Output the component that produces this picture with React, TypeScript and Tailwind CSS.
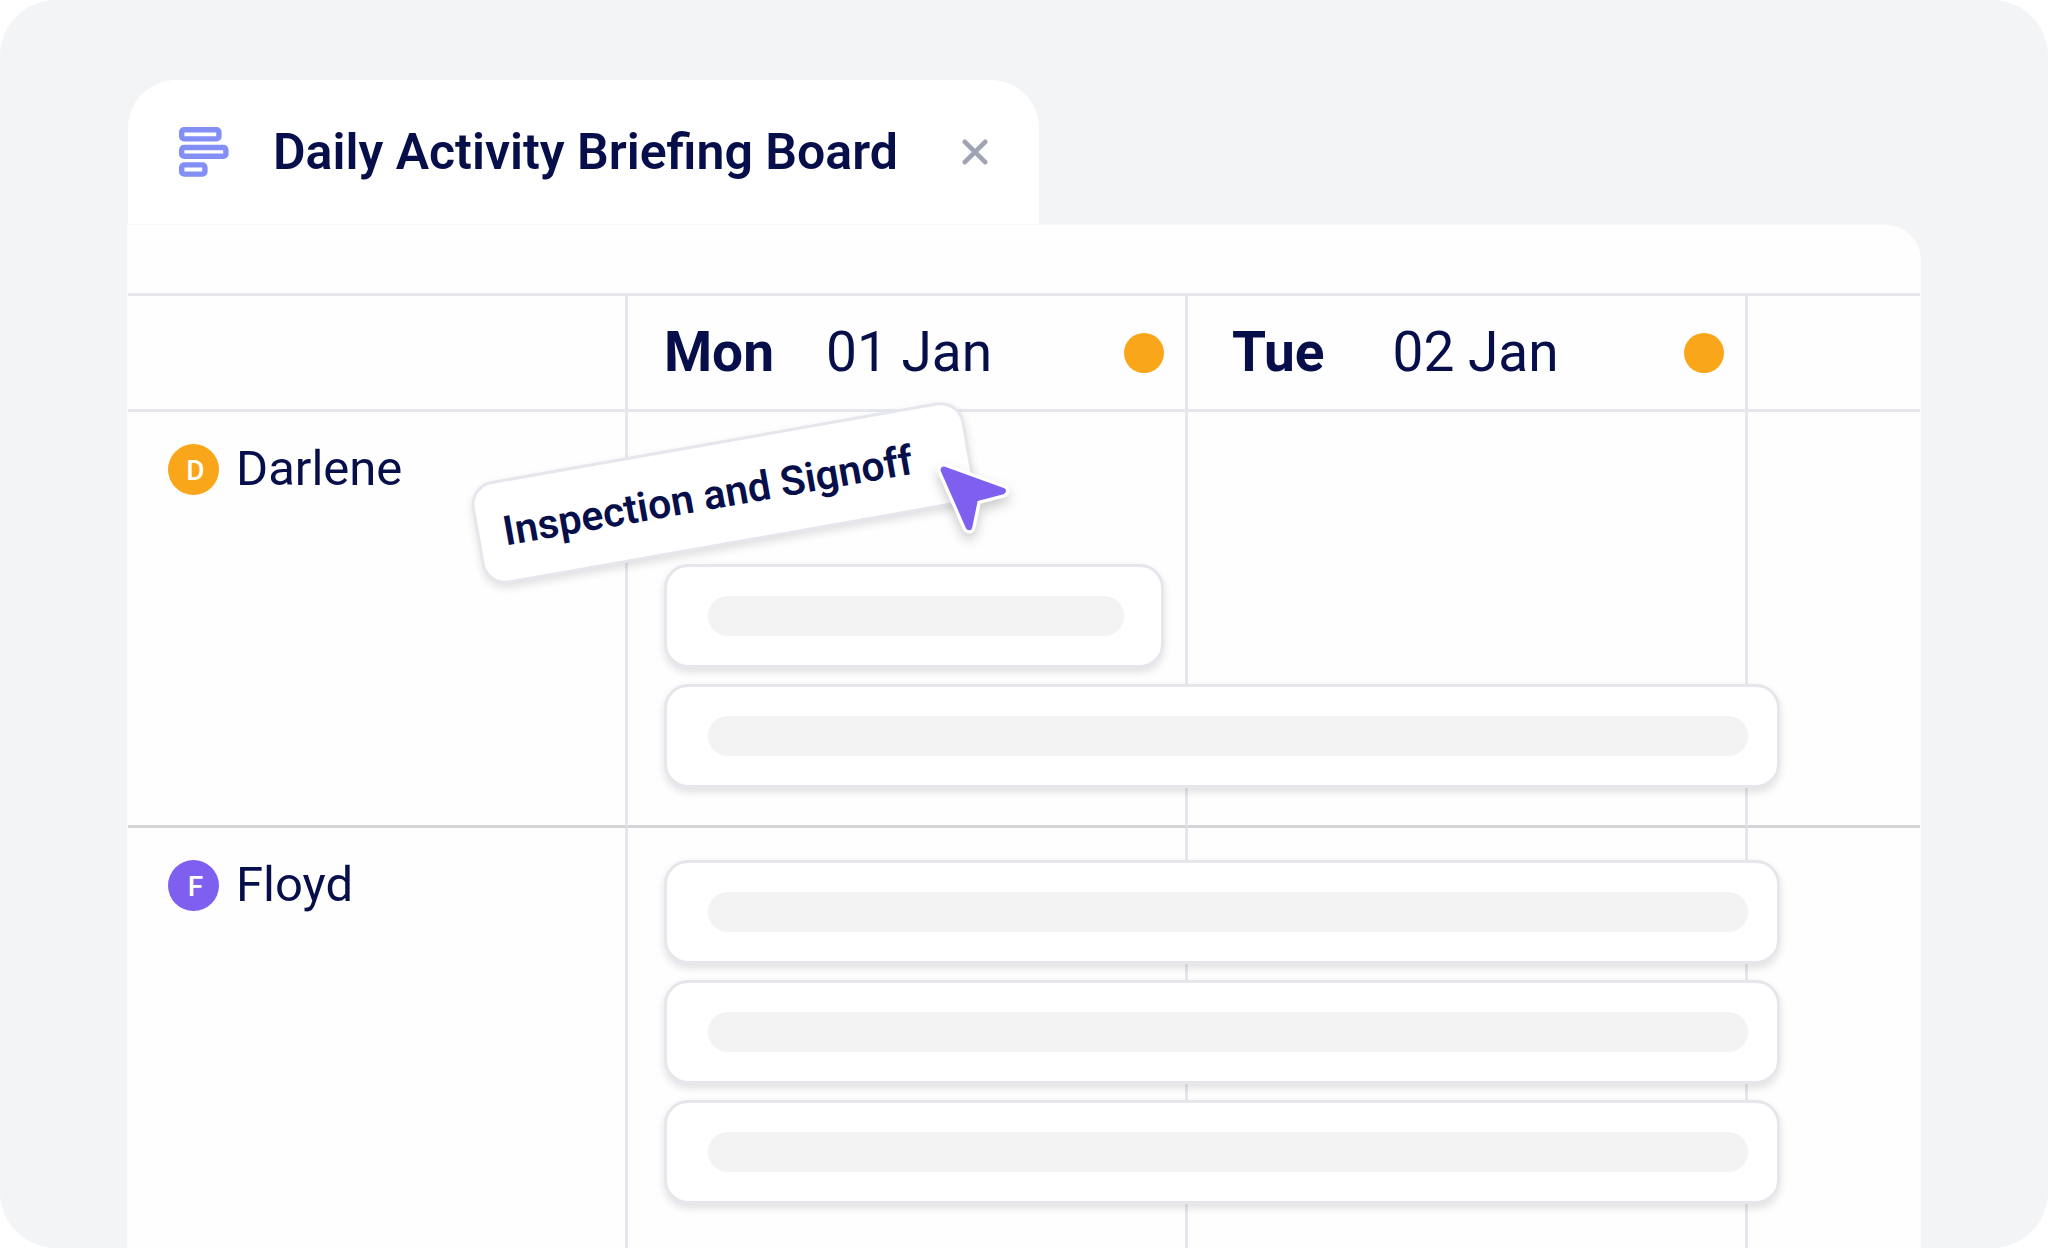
import React from "react";

interface Day {
    weekday: string;
    date: string;
    className: string;
}

interface Person {
    name: string;
    avatarClass: string;
    // "lifted" leaves its slot free while the card is being dragged
    tasks: ("lifted" | "short" | "long")[];
}

const days: Day[] = [
    { weekday: "Mon", date: "01 Jan", className: "pl-9 gap-[52px]" },
    { weekday: "Tue", date: "02 Jan", className: "pl-11 gap-[68px]" },
];

const people: Person[] = [
    { name: "Darlene", avatarClass: "bg-[#faa61a]", tasks: ["lifted", "short", "long"] },
    { name: "Floyd", avatarClass: "bg-[#7f5ff0]", tasks: ["long", "long", "long"] },
];

const BoardIcon = () => (
    <svg width="50" height="50" viewBox="0 0 50 50" fill="none" stroke="#838ff5" strokeWidth="5.4" className="shrink-0">
        <rect x="2.7" y="2.7" width="37.2" height="9.2" rx="2.4" />
        <rect x="2.7" y="20.5" width="44.2" height="8.8" rx="2.4" />
        <rect x="2.7" y="37.9" width="23.2" height="9.2" rx="2.4" />
    </svg>
);

const CloseIcon = () => (
    <svg width="26" height="26" viewBox="0 0 26 26" stroke="#a0a3b4" strokeWidth="4.6" strokeLinecap="round">
        <path d="M2.8 2.8l20.4 20.4M23.2 2.8L2.8 23.2" />
    </svg>
);

const Cursor = () => (
    <svg
        width="120"
        height="120"
        viewBox="0 0 120 120"
        strokeLinejoin="round"
        className="absolute -top-1 left-64 drop-shadow-[0_6px_6px_rgba(0,0,0,0.2)]"
    >
        <path d="M23.9 29.8L82.6 51L54.9 58.2L49 86.8Z" fill="#fff" stroke="#fff" strokeWidth="13.4" />
        <path d="M23.9 29.8L82.6 51L54.9 58.2L49 86.8Z" fill="#7f5ff0" stroke="#7f5ff0" strokeWidth="6.6" />
    </svg>
);

const cardClass = "h-[104px] rounded-3xl border-3 border-[#e6e7ed] bg-white shadow-[0_4px_8px_rgba(0,0,0,0.12)]";

const TaskBar = ({ long }: { long: boolean }) => (
    <div className={`${cardClass} relative z-10 py-[29px] pl-[41px] ${long ? "w-[calc(200%+116px)] pr-[29px]" : "w-full pr-[37px]"}`}>
        <div className="h-10 rounded-full bg-[#f3f3f3]" />
    </div>
);

const LiftedTask = () => (
    <div className="relative z-20 h-[104px]">
        <div className={`${cardClass} absolute -top-[3px] -left-[191px] flex w-[500px] -rotate-10 items-center pl-6`}>
            <span className="text-[41px] leading-none font-semibold whitespace-nowrap">Inspection and Signoff</span>
        </div>
        <Cursor />
    </div>
);

const App = () => {
    return (
        <main className="min-h-screen overflow-hidden rounded-[56px] bg-[#f3f4f6] px-[127px] pt-20 font-['Roboto',sans-serif] text-[#070f4b]">
            <div className="ml-px flex h-36 w-fit items-center rounded-t-[48px] bg-white pr-[51px] pl-[51px]">
                <BoardIcon />
                <h1 className="ml-11 text-[50px] leading-none font-semibold whitespace-nowrap">Daily Activity Briefing Board</h1>
                <button type="button" aria-label="Close" className="ml-16 cursor-pointer">
                    <CloseIcon />
                </button>
            </div>

            <section className="rounded-tr-[36px] border-t border-[#f8f8fa] bg-[#fefefe] px-px pt-[68px]">
                <table className="w-full table-fixed border-separate border-spacing-0 text-left">
                    <colgroup>
                        <col className="w-[27.9%]" />
                        <col className="w-[31.25%]" />
                        <col className="w-[31.25%]" />
                        <col />
                    </colgroup>
                    <thead>
                        <tr className="h-[119px] *:border-[#e6e7ed] *:border-y-3 *:p-0">
                            <td className="border-r-3" />
                            {days.map((day) => (
                                <th key={day.weekday} scope="col" className="border-r-3 font-normal">
                                    <div className={`flex items-center pr-[21px] text-[55px] leading-none ${day.className}`}>
                                        <span className="font-bold">{day.weekday}</span>
                                        <span>{day.date}</span>
                                        <span className="ml-auto size-10 rounded-full bg-[#faa61a]" />
                                    </div>
                                </th>
                            ))}
                            <td />
                        </tr>
                    </thead>
                    <tbody>
                        {people.map((person) => (
                            <tr
                                key={person.name}
                                className="align-top *:border-r-[#e6e7ed] *:border-b-[#d4d4d6] not-last:*:border-b-3"
                            >
                                <th scope="row" className="border-r-3 pt-8 pl-10 font-normal">
                                    <div className="flex items-start gap-[17px]">
                                        <span
                                            className={`flex size-[51px] items-center justify-center rounded-full pt-0.5 pl-1 text-[28px] leading-none font-medium text-white ${person.avatarClass}`}
                                        >
                                            {person.name[0]}
                                        </span>
                                        <span className="text-[49px] leading-none">{person.name}</span>
                                    </div>
                                </th>
                                <td className="border-r-3 pt-8 pr-[21px] pb-[37px] pl-9 in-[tr:last-child]:pb-11">
                                    <div className="flex flex-col gap-4">
                                        {person.tasks.map((task, i) =>
                                            task === "lifted" ? <LiftedTask key={i} /> : <TaskBar key={i} long={task === "long"} />
                                        )}
                                    </div>
                                </td>
                                <td className="border-r-3" />
                                <td />
                            </tr>
                        ))}
                    </tbody>
                </table>
            </section>
        </main>
    );
};

export default App;
